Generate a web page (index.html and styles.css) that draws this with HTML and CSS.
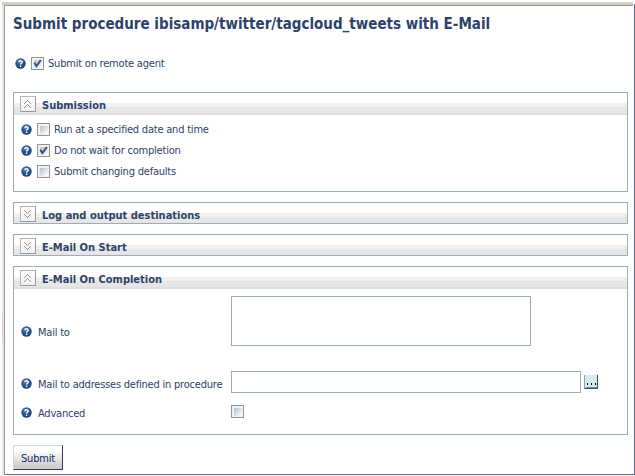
FILE: index.html
```html
<!DOCTYPE html>
<html lang="en">
<head>
<meta charset="utf-8">
<title>Submit procedure</title>
<link rel="stylesheet" href="styles.css">
</head>
<body>
<svg class="defs" width="0" height="0">
  <defs>
    <radialGradient id="ball" cx=".4" cy=".3" r=".75"><stop offset="0" stop-color="#4a78b4"/><stop offset="1" stop-color="#173a70"/></radialGradient>
    <symbol id="help" viewBox="0 0 11 11"><circle cx="5.5" cy="5.5" r="5.2" fill="url(#ball)"/><path d="M3.8 4.2C3.9 2.2 7.3 2.2 7.2 4.2C7.1 5.2 5.6 5.2 5.6 6.6M5.6 7.6V9" fill="none" stroke="#fff" stroke-width="1.4"/></symbol>
    <symbol id="up" viewBox="0 0 16 16"><path d="M4 7.5h1m5 0h1M5 6.5h1m3 0h1M6 5.5h1m1 0h1M7 4.5h1M4 11.5h1m5 0h1M5 10.5h1m3 0h1M6 9.5h1m1 0h1M7 8.5h1" fill="none" stroke="#969696" shape-rendering="crispEdges"/></symbol>
    <symbol id="down" viewBox="0 0 16 16"><path d="M4 4.5h1m5 0h1M5 5.5h1m3 0h1M6 6.5h1m1 0h1M7 7.5h1M4 8.5h1m5 0h1M5 9.5h1m3 0h1M6 10.5h1m1 0h1M7 11.5h1" fill="none" stroke="#969696" shape-rendering="crispEdges"/></symbol>
    <symbol id="tick" viewBox="0 0 13 13"><path d="M3.3 5.8L5.5 9L9.8 3" fill="none" stroke="#33508a" stroke-width="2"/></symbol>
  </defs>
</svg>
<main class="window">
  <h1><span>Submit procedure ibisamp/twitter/tagcloud_tweets with E-Mail</span></h1>
  <div class="option remote"><svg class="help"><use href="#help"/></svg><span class="check"><svg><use href="#tick"/></svg></span><span>Submit on remote agent</span></div>

  <section class="panel submission">
    <h2><span class="toggle"><svg><use href="#up"/></svg></span><span>Submission</span></h2>
    <div class="options">
      <div class="option"><svg class="help"><use href="#help"/></svg><span class="check"></span><span>Run at a specified date and time</span></div>
      <div class="option"><svg class="help"><use href="#help"/></svg><span class="check"><svg><use href="#tick"/></svg></span><span>Do not wait for completion</span></div>
      <div class="option"><svg class="help"><use href="#help"/></svg><span class="check"></span><span>Submit changing defaults</span></div>
    </div>
  </section>

  <section class="panel collapsed"><h2><span class="toggle"><svg><use href="#down"/></svg></span><span>Log and output destinations</span></h2></section>
  <section class="panel collapsed"><h2><span class="toggle"><svg><use href="#down"/></svg></span><span>E-Mail On Start</span></h2></section>

  <section class="panel completion">
    <h2><span class="toggle"><svg><use href="#up"/></svg></span><span>E-Mail On Completion</span></h2>
    <div class="field mail"><label><svg class="help"><use href="#help"/></svg><span>Mail to</span></label><div class="box area"></div></div>
    <div class="field address"><label><svg class="help"><use href="#help"/></svg><span>Mail to addresses defined in procedure</span></label><div class="box line"></div><div class="browse"><i></i><i></i><i></i></div></div>
    <div class="field advanced"><label><svg class="help"><use href="#help"/></svg><span>Advanced</span></label><span class="check"></span></div>
  </section>

  <div class="submit"><span>Submit</span></div>
</main>
</body>
</html>
```
FILE: styles.css
```css
* { box-sizing: border-box; }
body {
  margin: 0;
  width: 635px;
  height: 476px;
  overflow: hidden;
  padding: 2px 0 1px 2px;
  background: #fff;
  color: #2d4268;
  font: 11px/14px "DejaVu Sans Condensed", "DejaVu Sans", sans-serif;
  font-stretch: condensed;
  letter-spacing: -0.21px;
}
.defs { position: absolute; }
svg { display: block; }
.window {
  height: 473px;
  padding: 8px 6px 0 8px;
  background:
    linear-gradient(#d4cec9, #d4cec9) 0 0 / 631px 3px no-repeat,
    linear-gradient(#999696, #999696) 2px 3px / 629px 1px no-repeat,
    linear-gradient(#999696, #999696) 2px 3px / 1px 470px no-repeat,
    linear-gradient(#646484, #646484) 632px 2px / 1px 471px no-repeat,
    linear-gradient(#646484, #646484) 2px 472px / 631px 1px no-repeat,
    linear-gradient(#dfd5d0, #dfd5d0) 0 311px / 1px 29px no-repeat,
    linear-gradient(#e6e6e6, #e6e6e6) 0 3px / 2px 470px no-repeat;
}
.window > * { margin-left: 3px; }
h1 {
  margin: 0 0 0 3px;
  height: 47px;
  padding-top: 4px;
  font-size: 15px;
  line-height: 20px;
  font-weight: bold;
  letter-spacing: 0;
  white-space: nowrap;
}
.option { display: flex; height: 21px; white-space: nowrap; }
.help { width: 11px; height: 11px; margin: 1px 5px 0 0; flex: none; }
.check {
  width: 13px;
  height: 13px;
  flex: none;
  border: 1px solid #99948e;
  background: linear-gradient(135deg, #b4c2d0, #fff) 1.5px 1.5px / 8px 8px no-repeat, #f4f2ef;
}
.check svg { width: 13px; height: 13px; margin: -1px; }
.option > span:last-child { margin: 0 0 0 4px; }
.remote { height: 35px; padding-left: 2px; margin-left: 3px; }
.panel { width: 615px; border: 1px solid #9cacb8; margin-bottom: 10px; }
.panel h2 {
  display: flex;
  height: 22px;
  margin: 0;
  padding: 3px 0 0 6px;
  font-size: 11px;
  line-height: 16px;
  letter-spacing: 0;
  white-space: nowrap;
  background: linear-gradient(#fff 10px, #f0f0f0 10px 14px, #e6e6e6 14px 20px, #dbe0e6 20px);
}
.panel h2 > span:last-child { margin: 2px 0 0 6px; }
.toggle {
  width: 16px;
  height: 16px;
  border: 1px solid #b4b4b4;
  border-right-color: #999;
  border-bottom-color: #999;
  border-radius: 1px;
  background: linear-gradient(#fff, #f0f0f0);
}
.toggle svg { width: 16px; height: 16px; margin: -1px; }
.submission { height: 100px; }
.options { padding: 8px 0 0 7px; }
.collapsed { height: 22px; }
.collapsed h2 { height: 20px; }
.completion { height: 169px; }
.field { display: flex; padding-left: 7px; }
.field label { display: flex; width: 210px; white-space: nowrap; }
.field label span { margin: 1px 0 0 1px; }
.box { border: 1px solid #9cacb8; background: #fff; }
.mail { height: 82px; padding-top: 7px; }
.mail label { padding-top: 29px; }
.area { width: 300px; height: 50px; }
.address { height: 34px; }
.address label { padding-top: 6px; }
.line { width: 350px; height: 22px; }
.browse {
  display: flex;
  justify-content: space-between;
  align-items: flex-end;
  width: 14px;
  height: 14px;
  margin: 4px 0 0 3px;
  padding: 0 1px 3px 2px;
  border-left: 1px solid #8ba4b9;
  border-right: 1px solid #3c5078;
  border-bottom: 1px solid #3c5078;
  background: linear-gradient(#71939e, #71939e) 1px 12px / 11px 1px no-repeat, #d7eae9;
}
.browse i { width: 1px; height: 2px; background: #000; }
.advanced label { padding-top: 1px; }
.submit {
  width: 50px;
  height: 25px;
  padding: 6px 0 0 7px;
  border: 1px solid #d4d4d4;
  border-right-color: #303a5c;
  border-bottom-color: #303a5c;
  background: linear-gradient(#fff 20%, #d4cecb 85%);
  color: #0c2a60;
}
```
